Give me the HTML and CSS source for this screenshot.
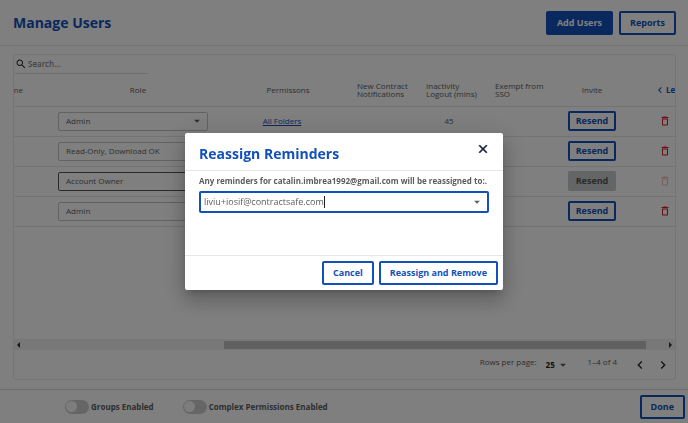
FILE: index.html
```html
<!DOCTYPE html>
<html lang="en">
<head>
    <meta charset="UTF-8">
    <meta name="viewport" content="width=device-width, initial-scale=1.0">
    <title>Manage Users</title>
    <link rel="stylesheet" href="styles.css">
</head>
<body>
    <!-- shared icons -->
    <svg class="sprite" aria-hidden="true">
        <symbol id="trash" viewBox="0 0 24 24"><path d="M6 19c0 1.1.9 2 2 2h8c1.1 0 2-.9 2-2V7H6v12zM8 9h8v10H8V9zm7.5-5l-1-1h-5l-1 1H5v2h14V4h-3.5z"/></symbol>
        <symbol id="search" viewBox="0 0 24 24"><path d="M15.5 14h-.79l-.28-.27C15.41 12.59 16 11.11 16 9.5 16 5.91 13.09 3 9.5 3S3 5.91 3 9.5 5.91 16 9.5 16c1.61 0 3.09-.59 4.23-1.57l.27.28v.79l5 4.99L20.49 19l-4.99-5zm-6 0C7.01 14 5 11.99 5 9.5S7.01 5 9.5 5 14 7.01 14 9.5 11.99 14 9.5 14z"/></symbol>
        <symbol id="left" viewBox="0 0 24 24"><path d="M15.41 7.41L14 6l-6 6 6 6 1.41-1.41L10.83 12z"/></symbol>
        <symbol id="right" viewBox="0 0 24 24"><path d="M10 6L8.59 7.41 13.17 12l-4.58 4.59L10 18l6-6z"/></symbol>
        <symbol id="down" viewBox="0 0 24 24"><path d="M7 10l5 5 5-5z"/></symbol>
        <symbol id="close" viewBox="0 0 24 24"><path d="M19 6.41L17.59 5 12 10.59 6.41 5 5 6.41 10.59 12 5 17.59 6.41 19 12 13.41 17.59 19 19 17.59 13.41 12z"/></symbol>
    </svg>

    <header class="page-header">
        <h1 class="title">Manage Users</h1>
        <div class="actions">
            <button class="btn btn-primary">Add Users</button>
            <button class="btn">Reports</button>
        </div>
    </header>

    <main class="panel">
        <label class="search">
            <svg class="icon"><use href="#search"/></svg>
            <input type="text" placeholder="Search..." aria-label="Search">
        </label>

        <table class="users">
            <colgroup>
                <col class="col-name">
                <col>
                <col class="col-permissions">
                <col class="col-notify">
                <col class="col-logout">
                <col class="col-sso">
                <col class="col-invite">
                <col class="col-remove">
            </colgroup>
            <thead>
                <tr>
                    <th class="name"><span>Name</span></th>
                    <th>Role</th>
                    <th>Permissons</th>
                    <th class="start">New Contract<br>Notifications</th>
                    <th class="start">Inactivity<br>Logout (mins)</th>
                    <th class="start sso">Exempt from<br>SSO</th>
                    <th>Invite</th>
                    <th class="less"><a href="#"><svg class="icon"><use href="#left"/></svg>Less</a></th>
                </tr>
            </thead>
            <tbody>
                <tr>
                    <td></td>
                    <td><div class="select"><select aria-label="Role"><option>Admin</option></select><svg class="icon"><use href="#down"/></svg></div></td>
                    <td class="folders"><a href="#">All Folders</a></td>
                    <td></td>
                    <td>45</td>
                    <td></td>
                    <td><button class="btn btn-small">Resend</button></td>
                    <td class="remove"><button class="icon-btn" aria-label="Remove user"><svg class="icon"><use href="#trash"/></svg></button></td>
                </tr>
                <tr>
                    <td></td>
                    <td><div class="select"><select aria-label="Role"><option>Read-Only, Download OK</option></select><svg class="icon"><use href="#down"/></svg></div></td>
                    <td></td>
                    <td></td>
                    <td></td>
                    <td></td>
                    <td><button class="btn btn-small">Resend</button></td>
                    <td class="remove"><button class="icon-btn" aria-label="Remove user"><svg class="icon"><use href="#trash"/></svg></button></td>
                </tr>
                <tr>
                    <td></td>
                    <td><div class="select owner"><select aria-label="Role"><option>Account Owner</option></select><svg class="icon"><use href="#down"/></svg></div></td>
                    <td></td>
                    <td></td>
                    <td></td>
                    <td></td>
                    <td><button class="btn btn-small" disabled>Resend</button></td>
                    <td class="remove"><button class="icon-btn" aria-label="Remove user" disabled><svg class="icon"><use href="#trash"/></svg></button></td>
                </tr>
                <tr>
                    <td></td>
                    <td><div class="select"><select aria-label="Role"><option>Admin</option></select><svg class="icon"><use href="#down"/></svg></div></td>
                    <td></td>
                    <td></td>
                    <td></td>
                    <td></td>
                    <td><button class="btn btn-small">Resend</button></td>
                    <td class="remove"><button class="icon-btn" aria-label="Remove user"><svg class="icon"><use href="#trash"/></svg></button></td>
                </tr>
            </tbody>
        </table>

        <div class="scrollbar">
            <span class="arrow arrow-left"></span>
            <div class="track"><div class="thumb"></div></div>
            <span class="arrow arrow-right"></span>
        </div>

        <div class="pagination">
            <label for="rows">Rows per page:</label>
            <div class="rows"><select id="rows"><option>25</option></select><svg class="icon"><use href="#down"/></svg></div>
            <span class="range">1–4 of 4</span>
            <button class="icon-btn" aria-label="Previous page"><svg class="icon"><use href="#left"/></svg></button>
            <button class="icon-btn" aria-label="Next page"><svg class="icon"><use href="#right"/></svg></button>
        </div>
    </main>

    <footer class="page-footer">
        <label class="toggle"><input type="checkbox">Groups Enabled</label>
        <label class="toggle"><input type="checkbox">Complex Permissions Enabled</label>
        <button class="btn">Done</button>
    </footer>

    <div class="overlay">
        <div class="modal" role="dialog" aria-labelledby="modal-title">
            <div class="modal-header">
                <h2 class="title" id="modal-title">Reassign Reminders</h2>
                <button class="icon-btn" aria-label="Close"><svg class="icon"><use href="#close"/></svg></button>
            </div>
            <div class="modal-body">
                <label for="assignee">Any reminders for catalin.imbrea1992@gmail.com will be reassigned to:.</label>
                <div class="combo">
                    <input type="text" id="assignee" value="liviu+iosif@contractsafe.com">
                    <span class="caret"></span>
                    <svg class="icon"><use href="#down"/></svg>
                </div>
            </div>
            <div class="modal-footer">
                <button class="btn">Cancel</button>
                <button class="btn">Reassign and Remove</button>
            </div>
        </div>
    </div>
</body>
</html>
```

FILE: styles.css
```css
* {
    box-sizing: border-box;
}
body {
    margin: 0;
    min-height: 100vh;
    display: flex;
    flex-direction: column;
    font-family: "Open Sans", "Noto Sans", sans-serif;
    font-size: 8px;
    line-height: 12px;
    color: #5c5c5c;
    background: #fff;
}
button, input, select {
    font: inherit;
    color: inherit;
}
.sprite {
    display: none;
}
.icon {
    width: 14px;
    height: 14px;
    fill: currentColor;
    flex: none;
    display: block;
}
.icon-btn {
    padding: 0;
    border: none;
    background: none;
    display: inline-flex;
    cursor: pointer;
}
.title {
    margin: 0;
    font-size: 14px;
    line-height: 20px;
    font-weight: bold;
    color: #1251ba;
}
.btn {
    height: 24px;
    padding: 0 9px;
    border: 2px solid #1251ba;
    border-radius: 2px;
    background: #fff;
    color: #1251ba;
    font-size: 9px;
    font-weight: bold;
    white-space: nowrap;
    cursor: pointer;
}
.btn-primary {
    background: #1251ba;
    color: #fff;
}
.btn-small {
    height: 20px;
    padding: 0 6px;
    vertical-align: middle;
}
.btn:disabled {
    background: #c8cacc;
    border-color: #c8cacc;
    color: #555;
}

/* header */
.page-header {
    display: flex;
    align-items: center;
    justify-content: space-between;
    height: 46px;
    padding: 0 12px 0 13px;
    border-bottom: 1px solid #eaeaea;
}
.actions {
    display: flex;
    gap: 6px;
}

/* users panel */
.panel {
    flex: 1;
    display: flex;
    flex-direction: column;
    margin: 8px 12px 9px 13px;
    border: 1px solid #eaeaea;
    border-radius: 3px;
    overflow: hidden;
}
.search {
    display: flex;
    align-items: center;
    gap: 1px;
    width: 133px;
    height: 19px;
    margin-left: 1px;
    border-bottom: 1px solid #ddd;
    color: #222;
}
.search .icon {
    width: 12px;
    height: 12px;
}
.search input {
    width: 100%;
    padding: 0;
    border: none;
    outline: none;
    background: none;
}
.search input::placeholder {
    color: #888;
    font-weight: 600;
}
.users {
    width: 100%;
    table-layout: fixed;
    border-collapse: collapse;
    text-align: center;
}
.col-name { width: 38px; }
.col-permissions { width: 128px; }
.col-notify { width: 69px; }
.col-logout { width: 56px; }
.col-sso { width: 68px; }
.col-invite { width: 94px; }
.col-remove { width: 36px; }
.users th {
    height: 32px;
    padding: 0;
    font-weight: normal;
    line-height: 8px;
    white-space: nowrap;
    border-bottom: 1px solid #e6e6e6;
}
.users td {
    height: 30px;
    padding: 0;
    border-bottom: 1px solid #e6e6e6;
}
.users th.start {
    padding-left: 5px;
    text-align: left;
}
.users th.sso {
    padding-left: 18px;
}
/* the name column is scrolled partly out of view */
.users th.name span {
    display: flex;
    justify-content: flex-end;
    width: 9px;
    line-height: 12px;
    overflow: hidden;
}
.users th.less {
    padding-left: 15px;
    overflow: hidden;
}
.less a {
    display: flex;
    align-items: center;
    color: #1251ba;
    font-weight: bold;
    text-decoration: none;
}
.less .icon {
    width: 12px;
    height: 12px;
}
.users td.folders {
    padding-right: 12px;
}
.folders a {
    color: #1251ba;
}
.users td.remove {
    padding-left: 16px;
    color: #e01b24;
}
.remove .icon {
    width: 12px;
    height: 12px;
}
.remove .icon-btn {
    vertical-align: middle;
}
.remove .icon-btn:disabled {
    opacity: 0.3;
}
.select {
    display: flex;
    align-items: center;
    height: 19px;
    margin: 0 16px 0 6px;
    padding: 0 3px 0 7px;
    border: 1px solid #c4c4c4;
    border-radius: 2px;
}
.select.owner {
    border-color: #555;
}
select {
    flex: 1;
    min-width: 0;
    padding: 0;
    border: none;
    outline: none;
    background: none;
    appearance: none;
}
.scrollbar {
    display: flex;
    align-items: center;
    height: 11px;
    margin-top: auto;
    padding: 0 3px;
    background: #f1f1f1;
}
.arrow {
    border: 3px solid transparent;
}
.arrow-left {
    border-left-width: 0;
    border-right-color: #333;
}
.arrow-right {
    border-right-width: 0;
    border-left-color: #333;
}
.track {
    flex: 1;
}
.thumb {
    width: 65%;
    height: 8px;
    margin-left: 31.5%;
    background: #c1c1c1;
}
.pagination {
    display: flex;
    align-items: center;
    justify-content: flex-end;
    height: 29px;
    padding-right: 4px;
}
.pagination label,
.pagination .range {
    padding-bottom: 5px;
}
.rows {
    display: flex;
    align-items: center;
    margin: 0 18px 0 9px;
    color: #222;
    font-weight: bold;
}
.rows .icon {
    color: #555;
}
.pagination .icon-btn {
    margin-left: 7px;
    color: #222;
}
.pagination .icon-btn .icon {
    width: 16px;
    height: 16px;
}
.pagination .range + .icon-btn {
    margin-left: 15px;
}

/* footer */
.page-footer {
    display: flex;
    align-items: center;
    gap: 29px;
    height: 34px;
    padding: 0 3px 0 65px;
    border-top: 1px solid #ddd;
}
.page-footer .btn {
    margin-left: auto;
}
.toggle {
    display: flex;
    align-items: center;
    gap: 2px;
    font-weight: bold;
}
.toggle input {
    appearance: none;
    display: flex;
    align-items: center;
    width: 24px;
    height: 14px;
    margin: 0;
    padding: 0 1px;
    border-radius: 7px;
    background: #ccc;
}
.toggle input::before {
    content: "";
    width: 11px;
    height: 11px;
    border-radius: 50%;
    background: #fafafa;
}

/* dialog */
.overlay {
    position: fixed;
    inset: 0;
    display: flex;
    align-items: center;
    justify-content: center;
    background: rgba(0,0,0,0.5);
}
.modal {
    width: 100%;
    max-width: 318px;
    border-radius: 2px;
    background: #fff;
    box-shadow: 0 5px 7px -3px rgba(0,0,0,0.2), 0 12px 19px 2px rgba(0,0,0,0.14), 0 4px 23px 4px rgba(0,0,0,0.12);
}
.modal-header {
    display: flex;
    align-items: center;
    justify-content: space-between;
    height: 38px;
    padding: 4px 13px 0 14px;
    border-bottom: 1px solid #e6e6e6;
}
.modal-header .icon-btn {
    margin-bottom: 9px;
    color: #14213d;
}
.modal-header .icon {
    stroke: currentColor;
}
.modal-body {
    min-height: 84px;
    padding: 4px 14px;
}
.modal-body label {
    display: block;
    font-weight: bold;
    white-space: nowrap;
}
.combo {
    display: flex;
    align-items: center;
    height: 22px;
    margin-top: 4px;
    padding: 0 3px;
    border: 2px solid #1251ba;
    border-radius: 2px;
    font-size: 9px;
}
.combo input {
    field-sizing: content;
    padding: 0;
    border: none;
    outline: none;
    background: none;
}
.caret {
    width: 1px;
    height: 12px;
    background: #222;
}
.combo .icon {
    margin-left: auto;
}
.modal-footer {
    display: flex;
    align-items: center;
    justify-content: flex-end;
    gap: 5px;
    height: 35px;
    padding: 0 5px;
    border-top: 1px solid #e6e6e6;
}
```
